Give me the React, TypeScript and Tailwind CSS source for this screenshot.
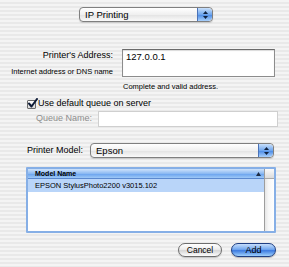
import React from "react";

const stripes =
  "bg-[repeating-linear-gradient(180deg,#f4f4f4_0px,#f4f4f4_2px,#e9e9e9_2px,#e9e9e9_4px)]";

function PopupArrows() {
  return (
    <div className="flex h-full w-[15px] flex-col items-center justify-center gap-[2px] rounded-r-[4px] border-l border-[#4a72b8] bg-[linear-gradient(180deg,#c9e0fb_0%,#6fa6ee_50%,#4f8de6_55%,#a9d0fb_100%)]">
      <svg width="5" height="3" viewBox="0 0 5 3">
        <path d="M2.5 0 L5 3 L0 3 Z" fill="#10223f" />
      </svg>
      <svg width="5" height="3" viewBox="0 0 5 3">
        <path d="M0 0 L5 0 L2.5 3 Z" fill="#10223f" />
      </svg>
    </div>
  );
}

function Popup({ label, width }: { label: string; width: string }) {
  return (
    <div
      className={`${width} flex h-[15px] items-center overflow-hidden rounded-[4px] border border-[#7f7f7f] bg-[linear-gradient(180deg,#ffffff_0%,#f0f0f0_50%,#e4e4e4_55%,#fafafa_100%)] shadow-[0_1px_1px_rgba(0,0,0,0.15)]`}
    >
      <span className="flex-1 pl-[5px] text-[9.5px] leading-[13px] text-black">{label}</span>
      <PopupArrows />
    </div>
  );
}

function Checkbox() {
  return (
    <div className="relative h-[10px] w-[10px]">
      <div className="h-[9px] w-[9px] translate-y-[1px] rounded-[1px] border border-[#6b6b6b] bg-[linear-gradient(180deg,#ffffff,#d8d8d8)]" />
      <svg className="absolute left-[1px] top-[-1px]" width="10" height="10" viewBox="0 0 10 10">
        <path d="M1 5.5 L3.5 8.5 L9 1" fill="none" stroke="#0d1a36" strokeWidth="2" strokeLinecap="round" strokeLinejoin="round" />
      </svg>
    </div>
  );
}

export default function App() {
  return (
    <div
      className={`h-[267px] w-[289px] overflow-hidden ${stripes} font-['Liberation_Sans',Arial,sans-serif] text-black`}
    >
      <div className="flex pl-[79px] pt-[7px]">
        <Popup label="IP Printing" width="w-[134px]" />
      </div>

      <div className="mt-[27px] flex">
        <div className="flex w-[113px] flex-col items-end pt-[1px]">
          <span className="text-[9px] leading-[11px]">Printer's Address:</span>
          <span className="mt-[6px] text-[7.5px] leading-[9px]">Internet address or DNS name</span>
        </div>
        <div className="ml-[9px] h-[28px] w-[153px] border border-[#8c8c8c] border-t-[#6a6a6a] bg-white pl-[3px] pt-[1px] text-[9.5px] leading-[12px] shadow-[inset_0_1px_1px_rgba(0,0,0,0.15)]">
          127.0.0.1
        </div>
      </div>

      <div className="mt-[5px] pl-[123px] text-[7.5px] leading-[9px]">Complete and valid address.</div>

      <div className="mt-[7px] flex items-center pl-[27px]">
        <Checkbox />
        <span className="ml-[1px] text-[9px] leading-[11px]">Use default queue on server</span>
      </div>

      <div className="mt-[2px] flex">
        <span className="ml-[36px] pt-[2px] text-[9px] leading-[11px] text-[#8e8e8e]">Queue Name:</span>
        <div className="ml-[6px] h-[16px] w-[180px] border border-[#cfcfcf] bg-white" />
      </div>

      <div className="mt-[16px] flex">
        <span className="ml-[27px] pt-[2px] text-[9px] leading-[11px]">Printer Model:</span>
        <div className="ml-[7px]">
          <Popup label="Epson" width="w-[184px]" />
        </div>
      </div>

      <div className="ml-[26px] mt-[9px] h-[66px] w-[250px] rounded-[1px] border-2 border-[#86afe6] bg-white">
        <div className="flex h-full">
          <div className="flex flex-1 flex-col">
            <div className="flex h-[10px] items-center justify-between border-b border-[#5b89cf] bg-[linear-gradient(180deg,#cfe3fb_0%,#8dbaf2_50%,#6aa3ee_55%,#9ec9f7_100%)] pl-[7px] pr-[3px]">
              <span className="text-[7px] font-bold leading-[9px]">Model Name</span>
              <svg width="5" height="4" viewBox="0 0 5 4">
                <path d="M2.5 0 L5 4 L0 4 Z" fill="#1e2c44" />
              </svg>
            </div>
            <div className="flex h-[13px] items-center bg-[#b9d5f9] pl-[7px] text-[7.5px] leading-[9px]">
              EPSON StylusPhoto2200 v3015.102
            </div>
            <div className="flex-1 bg-white" />
          </div>
          <div className="flex w-[10px] flex-col border-l border-[#9d9d9d]">
            <div className="h-[10px] border-b border-[#a8a8a8] bg-[linear-gradient(180deg,#fafafa,#dcdcdc)]" />
            <div className="flex-1 bg-[linear-gradient(90deg,#e6e6e6,#f7f7f7_40%,#ffffff)]" />
          </div>
        </div>
      </div>

      <div className="mt-[10px] flex pl-[178px]">
        <div className="flex h-[14px] w-[44px] items-center justify-center rounded-full border border-[#6d6d6d] bg-[linear-gradient(180deg,#ffffff_0%,#ececec_45%,#d6d6d6_55%,#fdfdfd_100%)] text-[8.5px] leading-[10px] shadow-[0_1px_1px_rgba(0,0,0,0.2)]">
          Cancel
        </div>
        <div className="ml-[9px] flex h-[14px] w-[45px] items-center justify-center rounded-full border border-[#1f3f83] bg-[linear-gradient(180deg,#c6defc_0%,#73a8ef_45%,#3d7be0_55%,#9fd0fc_100%)] text-[9px] leading-[10px] shadow-[0_1px_1px_rgba(0,0,0,0.25)]">
          Add
        </div>
      </div>
    </div>
  );
}
